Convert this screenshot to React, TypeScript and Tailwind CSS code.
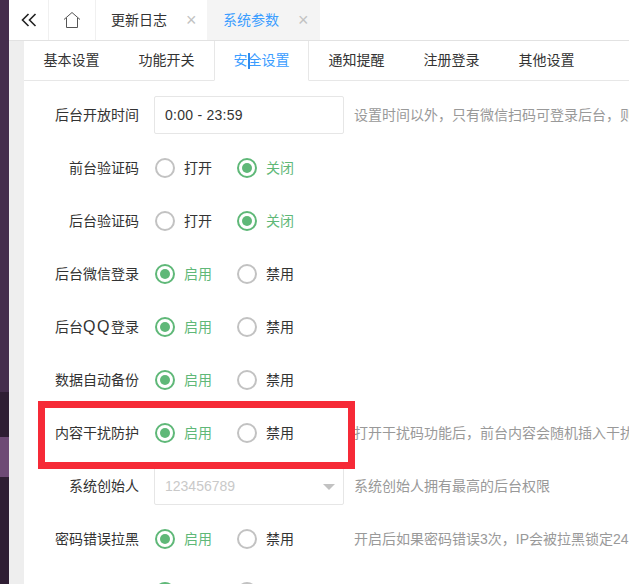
const Radio = ({ label, checked }: { label: string; checked?: boolean }) => (
  <div className="flex items-center w-[82px]">
    {checked ? (
      <span className="w-5 h-5 rounded-full border-2 border-[#5fb878] flex items-center justify-center shrink-0">
        <span className="w-[10px] h-[10px] rounded-full bg-[#5fb878]" />
      </span>
    ) : (
      <span className="w-5 h-5 rounded-full border-2 border-[#c2c2c2] shrink-0" />
    )}
    <span className={checked ? "ml-[9px] text-[#5fb878]" : "ml-[9px] text-[#333]"}>
      {label}
    </span>
  </div>
);

const Row = ({
  label,
  children,
  hint,
}: {
  label: React.ReactNode;
  children: React.ReactNode;
  hint?: string;
}) => (
  <div className="flex items-center h-[53px] shrink-0">
    <div className="w-[115px] text-right text-[#333] shrink-0">{label}</div>
    <div className="ml-[15px] w-[190px] flex shrink-0">{children}</div>
    {hint && <div className="ml-[10px] text-[#999] whitespace-nowrap">{hint}</div>}
  </div>
);

const Switch = ({ a, b, on }: { a: string; b: string; on: "a" | "b" }) => (
  <div className="flex pl-px">
    <Radio label={a} checked={on === "a"} />
    <Radio label={b} checked={on === "b"} />
  </div>
);

const subTabs = ["基本设置", "功能开关", "安全设置", "通知提醒", "注册登录", "其他设置"];

export default function App() {
  return (
    <div
      className="relative flex w-[629px] h-[584px] overflow-hidden text-sm bg-[#eeeeee]"
      style={{ fontFamily: '"Liberation Sans", "Noto Sans CJK SC", sans-serif' }}
    >
      {/* sidebar */}
      <div className="w-[9px] shrink-0 flex flex-col">
        <div className="h-[392px] bg-[#452d4c]" />
        <div className="h-[45px] bg-[#2f1e33]" />
        <div className="h-10 bg-[#6e4a75]" />
        <div className="flex-1 bg-[#2f1e33]" />
      </div>

      <div className="flex-1 min-w-0 flex flex-col">
        {/* top tabs */}
        <div className="h-[41px] shrink-0 flex bg-white border-b border-[#e2e2e2]">
          <div className="w-10 flex items-center justify-center border-r border-[#f0f0f0]">
            <svg width="16" height="14" viewBox="0 0 16 14" fill="none" stroke="#222" strokeWidth="1.6">
              <path d="M7.5 1 L1.5 7 L7.5 13" />
              <path d="M14.5 1 L8.5 7 L14.5 13" />
            </svg>
          </div>
          <div className="w-[47px] flex items-center justify-center border-r border-[#f0f0f0]">
            <svg width="18" height="18" viewBox="0 0 18 18" fill="none" stroke="#555" strokeWidth="1">
              <path d="M1 8.5 L9 1.5 L17 8.5" />
              <path d="M3.5 7 V16.5 H14.5 V7" />
            </svg>
          </div>
          <div className="w-[111px] flex items-center pl-[15px] text-[#333]">
            <span>更新日志</span>
            <span className="ml-[19px] text-[#c2c2c2] text-lg leading-none">×</span>
          </div>
          <div className="w-[113px] flex items-center pl-4 bg-[#f4f4f4] text-[#3b9dff]">
            <span>系统参数</span>
            <span className="ml-[19px] text-[#c2c2c2] text-lg leading-none">×</span>
          </div>
        </div>

        {/* settings card */}
        <div className="flex-1 ml-[15px] bg-white flex flex-col min-h-0">
          <div className="h-10 shrink-0 flex border-b border-[#e7e7e7]">
            {subTabs.map((t) =>
              t === "安全设置" ? (
                <div
                  key={t}
                  className="relative w-[95px] h-10 pb-[2px] flex items-center justify-center bg-white text-[#3b9dff] border-x border-[#e7e7e7] border-b border-b-white"
                >
                  {t}
                  <span className="absolute left-[33px] top-[12px] w-[2px] h-[16px] bg-[#2f8cf0]" />
                </div>
              ) : (
                <div key={t} className="w-[95px] pb-[2px] flex items-center justify-center text-[#333]">
                  {t}
                </div>
              )
            )}
          </div>

          <div className="pt-[7px] flex flex-col">
            <Row label="后台开放时间" hint="设置时间以外，只有微信扫码可登录后台，则">
              <div className="w-[190px] h-[38px] border border-[#e6e6e6] rounded-[2px] flex items-center pl-[10px] text-[#333] tracking-[0.25px]">
                0:00 - 23:59
              </div>
            </Row>
            <Row label="前台验证码">
              <Switch a="打开" b="关闭" on="b" />
            </Row>
            <Row label="后台验证码">
              <Switch a="打开" b="关闭" on="b" />
            </Row>
            <Row label="后台微信登录">
              <Switch a="启用" b="禁用" on="a" />
            </Row>
            <Row
              label={
                <>
                  后台<span className="text-base leading-none tracking-[1.6px]">QQ</span>登录
                </>
              }
            >
              <Switch a="启用" b="禁用" on="a" />
            </Row>
            <Row label="数据自动备份">
              <Switch a="启用" b="禁用" on="a" />
            </Row>
            <Row label="内容干扰防护" hint="打开干扰码功能后，前台内容会随机插入干扰">
              <Switch a="启用" b="禁用" on="a" />
            </Row>
            <Row label="系统创始人" hint="系统创始人拥有最高的后台权限">
              <div className="relative w-[190px] h-[38px] border border-[#e6e6e6] rounded-[2px] flex items-center pl-[10px] text-[#c9c9c9]">
                123456789
                <span className="absolute right-[8px] top-[16px] w-0 h-0 border-x-[6px] border-x-transparent border-t-[6px] border-t-[#c2c2c2]" />
              </div>
            </Row>
            <Row label="密码错误拉黑" hint="开启后如果密码错误3次，IP会被拉黑锁定24">
              <Switch a="启用" b="禁用" on="a" />
            </Row>
            <Row label="">
              <Switch a="启用" b="禁用" on="a" />
            </Row>
          </div>
        </div>
      </div>

      {/* red annotation box */}
      <div className="absolute left-[38px] top-[401px] w-[317px] h-[68px] border-[7px] border-[#f62a37] pointer-events-none" />
    </div>
  );
}
